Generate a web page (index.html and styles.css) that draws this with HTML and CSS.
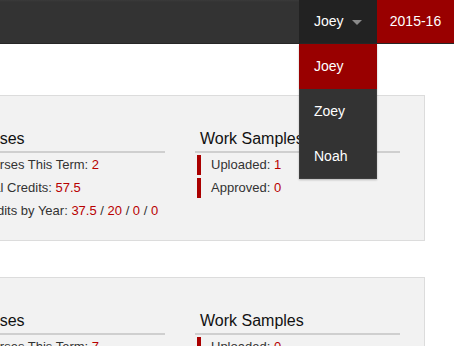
FILE: index.html
```html
<!DOCTYPE html>
<html>
<head>
<meta charset="utf-8">
<link rel="stylesheet" href="styles.css">
</head>
<body>
<nav class="navbar">
  <div class="user">
    <div class="user-toggle"><span>Joey</span><span class="caret"></span></div>
    <ul class="dropdown">
      <li class="active">Joey</li>
      <li>Zoey</li>
      <li>Noah</li>
    </ul>
  </div>
  <div class="year">2015-16</div>
</nav>
<main class="content">
  <section class="panel">
    <div class="col">
      <h3>Courses</h3>
      <ul class="stats">
        <li>Courses This Term: <b>2</b></li>
        <li>Total Credits: <b>57.5</b></li>
        <li>Credits by Year: <b>37.5</b> / <b>20</b> / <b>0</b> / <b>0</b></li>
      </ul>
    </div>
    <div class="col">
      <h3>Work Samples</h3>
      <ul class="stats">
        <li>Uploaded: <b>1</b></li>
        <li>Approved: <b>0</b></li>
      </ul>
    </div>
  </section>
  <section class="panel">
    <div class="col">
      <h3>Courses</h3>
      <ul class="stats">
        <li>Courses This Term: <b>7</b></li>
        <li>Total Credits: <b>42</b></li>
        <li>Credits by Year: <b>20</b> / <b>22</b> / <b>0</b> / <b>0</b></li>
      </ul>
    </div>
    <div class="col">
      <h3>Work Samples</h3>
      <ul class="stats">
        <li>Uploaded: <b>0</b></li>
        <li>Approved: <b>0</b></li>
      </ul>
    </div>
  </section>
</main>
</body>
</html>
```
FILE: styles.css
```css
html, body {
  margin: 0;
  padding: 0;
  background: #fff;
  font-family: "Liberation Sans", Arial, sans-serif;
  overflow: hidden;
}

.navbar {
  display: flex;
  justify-content: flex-end;
  height: 43px;
  background: linear-gradient(#3a3a3a 0, #333 2px, #333 100%);
  border-bottom: 1px solid #272727;
  color: #fff;
  font-size: 14px;
  line-height: 43px;
}

.user {
  position: relative;
  width: 78px;
  background: #222;
}

.user-toggle {
  display: flex;
  align-items: center;
  padding-left: 15px;
  height: 43px;
}

.caret {
  width: 0;
  height: 0;
  margin-left: 8px;
  margin-top: 1px;
  border-top: 5px solid #8a8a8a;
  border-left: 5px solid transparent;
  border-right: 5px solid transparent;
}

.dropdown {
  position: absolute;
  top: 44px;
  left: 0;
  width: 78px;
  box-sizing: border-box;
  margin: 0;
  padding: 0;
  list-style: none;
  background: #333;
  border: 1px solid #3d3d3d;
  border-top: 0;
  box-shadow: 0 1px 2px rgba(0, 0, 0, 0.25);
  z-index: 5;
}

.dropdown li {
  height: 45px;
  line-height: 45px;
  padding-left: 14px;
  color: #fff;
  font-size: 14px;
}

.dropdown li.active {
  background: #990000;
  margin: 0 -1px;
  padding-left: 15px;
}

.dropdown li:last-child {
  height: 44px;
}

.year {
  width: 77px;
  background: #990000;
  text-align: center;
}

.content {
  padding-top: 51px;
}

.panel {
  display: flex;
  gap: 30px;
  width: 440px;
  margin: 0 0 36px -61px;
  padding: 34px 24px 16px 20px;
  background: #f2f2f2;
  border: 1px solid #dcdcdc;
}

.col {
  width: 205px;
}

.col h3 {
  margin: 0;
  padding: 0 0 3px 5px;
  font-size: 16px;
  line-height: 18px;
  font-weight: normal;
  color: #111;
  border-bottom: 2px solid #cfcfcf;
}

.stats {
  list-style: none;
  margin: 2px 0 0 2px;
  padding: 0;
}

.stats li {
  height: 20px;
  line-height: 20px;
  margin-bottom: 3px;
  padding-left: 10px;
  border-left: 4px solid #aa0000;
  font-size: 13px;
  color: #333;
  white-space: nowrap;
}

.stats b {
  font-weight: normal;
  color: #b80000;
}
```
